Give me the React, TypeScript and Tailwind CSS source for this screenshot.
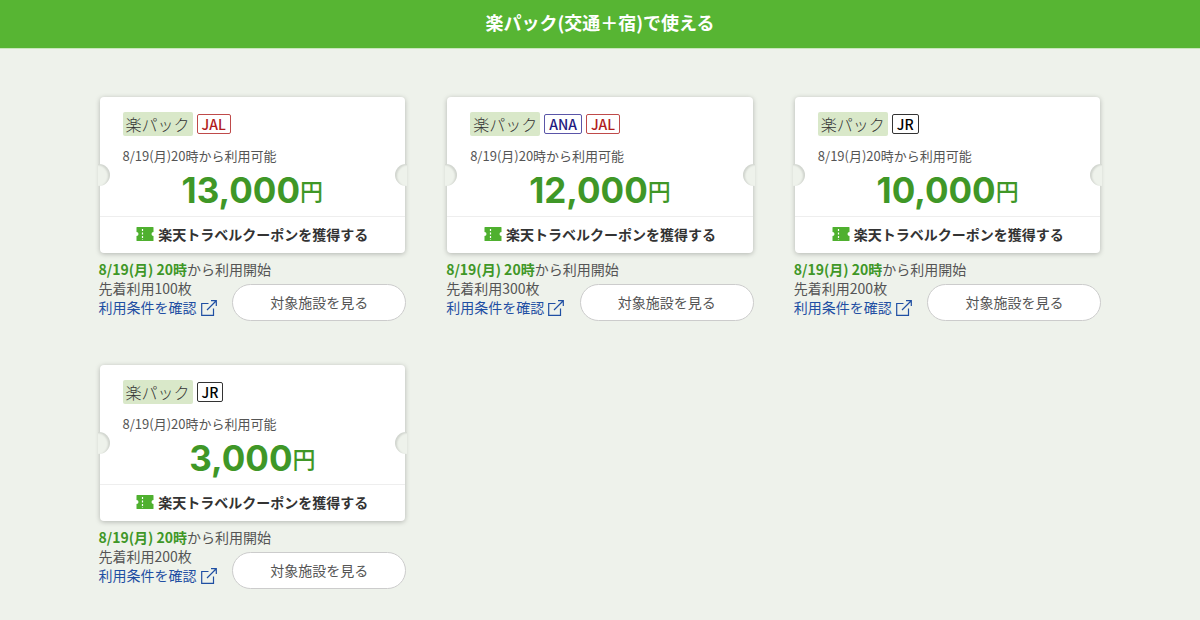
import { clsx } from 'clsx'

type Carrier = 'JAL' | 'ANA' | 'JR'

interface Coupon {
  id: number
  carriers: Carrier[]
  amount: string
  limit: number
}

const coupons: Coupon[] = [
  { id: 1, carriers: ['JAL'], amount: '13,000', limit: 100 },
  { id: 2, carriers: ['ANA', 'JAL'], amount: '12,000', limit: 300 },
  { id: 3, carriers: ['JR'], amount: '10,000', limit: 200 },
  { id: 4, carriers: ['JR'], amount: '3,000', limit: 200 },
]

const carrierStyles: Record<Carrier, string> = {
  JAL: 'border-[#bf4a4a] text-[#b01c1c]',
  ANA: 'border-[#5a55a8] text-[#1f1a80]',
  JR: 'border-[#333] text-black',
}

export default function App() {
  return (
    <div className="min-h-screen bg-[#eef2eb] pb-8 font-['Noto_Sans_CJK_JP',sans-serif] text-sm text-[#555]">
      <header className="box-content flex h-12 items-center justify-center border-b border-[#c8e6bb] bg-[#57b533]">
        <h2 className="pb-1 text-lg leading-6 font-bold text-white">楽パック(交通＋宿)で使える</h2>
      </header>

      <main className="mx-auto mt-12 grid w-full max-w-[1003px] grid-cols-3 gap-x-10 gap-y-11">
        {coupons.map((coupon) => (
          <CouponItem key={coupon.id} coupon={coupon} />
        ))}
      </main>
    </div>
  )
}

function CouponItem({ coupon }: { coupon: Coupon }) {
  return (
    <section>
      <div className="px-px">
        <CouponTicket coupon={coupon} />
      </div>

      <div className="mt-[7px] leading-[19px]">
        <p>
          <strong className="font-bold text-[#3f9727]">8/19(月) 20時</strong>から利用開始
        </p>
        <div className="flex items-start justify-between">
          <div>
            <p>先着利用{coupon.limit}枚</p>
            <a href="#terms" className="flex items-center gap-1 text-[#1f4fa3]">
              利用条件を確認
              <ExternalIcon />
            </a>
          </div>
          <button
            type="button"
            className="mt-[5px] h-[37px] w-[174px] rounded-full border border-[#ccc] bg-white text-[#555]"
          >
            対象施設を見る
          </button>
        </div>
      </div>
    </section>
  )
}

function CouponTicket({ coupon }: { coupon: Coupon }) {
  return (
    <div className="relative rounded bg-white shadow-[0_1px_5px_rgba(0,0,0,0.25)]">
      {/* Punched notches */}
      <Notch side="left" />
      <Notch side="right" />

      <div className="px-[23px] pt-[15px]">
        <div className="flex items-center gap-1">
          <span className="h-6 rounded-xs bg-[#d9e8c9] px-[3px] text-base leading-[25px] font-light text-[#333]">
            楽パック
          </span>
          {coupon.carriers.map((carrier) => (
            <span
              key={carrier}
              className={clsx('h-5 rounded-xs border px-1 text-sm leading-[19px] font-medium', carrierStyles[carrier])}
            >
              {carrier}
            </span>
          ))}
        </div>
        <p className="mt-2.5 text-[13px] leading-5">8/19(月)20時から利用可能</p>
        <p className="flex h-[50px] items-center justify-center pb-0.5 text-[#3f9727]">
          <span className="font-['Inter'] text-[35px] leading-10 font-bold">{coupon.amount}</span>
          <span className="text-[23px] leading-10 font-medium">円</span>
        </p>
      </div>

      <button
        type="button"
        className="flex h-[37px] w-full items-center justify-center gap-1 border-t border-[#eee] pb-0.5 font-bold text-[#333]"
      >
        <TicketIcon />
        楽天トラベルクーポンを獲得する
      </button>
    </div>
  )
}

function Notch({ side }: { side: 'left' | 'right' }) {
  return (
    <span
      className={clsx(
        'absolute top-[67px] h-[22px] w-3 bg-[#eef2eb]',
        side === 'left'
          ? '-left-0.5 rounded-r-full shadow-[inset_-2px_1px_2px_rgba(0,0,0,0.12)]'
          : '-right-0.5 rounded-l-full shadow-[inset_2px_1px_2px_rgba(0,0,0,0.12)]',
      )}
    />
  )
}

function TicketIcon() {
  return (
    <svg viewBox="0 0 18 16" className="h-4 w-[18px]" aria-hidden="true">
      <path
        d="M1 1h16q.5 0 .5.5V6a2 2 0 0 0 0 4v4.500q0 .5-.5.5H1q-.5 0-.5-.5V10a2 2 0 0 0 0-4V1.500q0-.5.5-.5z"
        fill="#4fb02f"
      />
      <path d="M6.500 3v11" stroke="#fff" strokeWidth="1.200" strokeDasharray="2 1.500" />
    </svg>
  )
}

function ExternalIcon() {
  return (
    <svg viewBox="0 0 16 16" className="size-4" fill="none" stroke="currentColor" strokeWidth="1.200" aria-hidden="true">
      <path d="M7.500 3.500H.7v11.800h11.800V8.500M6 10 15 1M10 .7h5.300V6" />
    </svg>
  )
}
